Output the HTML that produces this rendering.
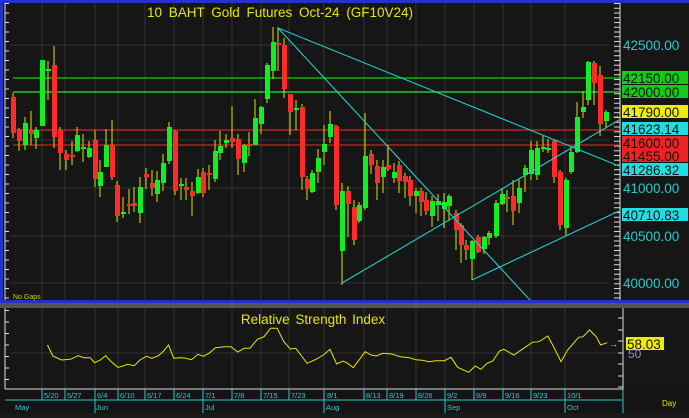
<!DOCTYPE html><html><head><style>body{margin:0;width:689px;height:413px;overflow:hidden;background:#1a1a1a;font-family:"Liberation Sans",sans-serif}</style></head><body>
<svg width="689" height="413" xmlns="http://www.w3.org/2000/svg" font-family="Liberation Sans, sans-serif">
<defs>
<pattern id="lt" x="0" y="3" width="10" height="9.5" patternUnits="userSpaceOnUse"><rect x="5" y="0" width="4" height="1" fill="#ddd"/></pattern>
<pattern id="rt" x="0" y="3" width="10" height="4.75" patternUnits="userSpaceOnUse"><rect x="614" y="0" width="6" height="1" fill="#ddd"/></pattern>
<pattern id="rt2" x="0" y="3" width="10" height="4.75" patternUnits="userSpaceOnUse"><rect x="4" y="0" width="6" height="1" fill="#ddd"/></pattern>
<pattern id="lt2" x="0" y="310" width="10" height="11.5" patternUnits="userSpaceOnUse"><rect x="5" y="0" width="4" height="1" fill="#ddd"/></pattern>
</defs>
<rect width="689" height="413" fill="#161616"/>
<rect x="0" y="0" width="689" height="3" fill="#2233cc"/>
<rect x="0" y="0" width="3" height="303" fill="#2233cc"/>
<rect x="0" y="300" width="689" height="3" fill="#2233cc"/>
<rect x="0" y="303" width="689" height="5" fill="#555"/>
<rect x="0" y="389" width="689" height="24" fill="#141414"/>
<line x1="620" y1="3" x2="620" y2="300" stroke="#ddd"/>
<line x1="5" y1="3" x2="5" y2="300" stroke="#ddd"/>
<rect x="5" y="3" width="5" height="297" fill="url(#lt)"/>
<rect x="610" y="3" width="10" height="297" fill="url(#rt2)" transform="translate(0,0)"/>
<g stroke="#333" stroke-width="1">
<path d="M10 45H609M10 92H609M10 140H609M10 188H609M10 236H609M10 283H609"/>
<path d="M42 3V300M65 3V300M95 3V300M118 3V300M145 3V300M174 3V300M203 3V300M232 3V300M261 3V300M289 3V300M324 3V300M364 3V300M387 3V300M416 3V300M445 3V300M474 3V300M503 3V300M531 3V300M565 3V300"/>
<path d="M42 308V389M65 308V389M95 308V389M118 308V389M145 308V389M174 308V389M203 308V389M232 308V389M261 308V389M289 308V389M324 308V389M364 308V389M387 308V389M416 308V389M445 308V389M474 308V389M503 308V389M531 308V389M565 308V389M10 353H617"/>
</g>
<text x="280" y="17" fill="#e6e600" font-size="13.5" text-anchor="middle" word-spacing="3">10 BAHT Gold Futures Oct-24 (GF10V24)</text>
<line x1="13" y1="78" x2="619" y2="78" stroke="#10b010" stroke-width="1.5"/>
<line x1="13" y1="92" x2="619" y2="92" stroke="#22ee22" stroke-width="1.2"/>
<line x1="13" y1="130" x2="619" y2="130" stroke="#dd2222" stroke-width="1.3"/>
<line x1="13" y1="145" x2="619" y2="145" stroke="#cc2222" stroke-width="1.3"/>
<path stroke="#e0e000" stroke-width="1" fill="none" d="M13 93V138M19 128V151M25 117V150M31 111V145M36 127V149M42 60V126M48 61V100M54 46V148M60 127V170M66 150V170M72 141V165M77 127V152M83 134V162M89 141V158M95 130V187M100 160V197M106 129V167M112 120V180M117 181V222M123 197V218M129 189V214M134 187V212M140 177V223M146 168V189M152 170V196M157 171V202M163 154V191M169 122V164M175 130V195M181 178V200M186 178V200M192 182V216M198 169V194M203 168V197M209 165V190M215 140V182M220 131V160M226 134V148M232 106V148M238 134V175M244 144V172M249 132V156M255 99V145M261 106V134M267 63V103M273 27V79M278 27V71M284 38V98M290 94V135M296 100V130M302 104V190M307 176V200M312 170V193M318 149V183M324 125V165M330 111V143M336 125V210M342 183V285M348 186V237M354 200V245M359 202V223M365 113V210M371 150V174M377 160V200M383 160V193M388 145V171M394 163V183M399 161V193M405 173V198M410 176V206M416 188V213M421 188V216M426 192V215M432 196V227M438 194V221M444 193V228M449 194V221M456 210V250M461 223V263M466 240V260M472 240V280M478 235V253M484 236V254M489 231V245M496 200V238M502 188V205M507 190V212M513 180V225M519 179V213M525 165V192M531 141V180M537 141V180M543 136V152M548 139V153M554 139V183M560 170V230M566 178V235M571 146V174M577 102V153M583 91V118M588 61V105M594 61V105M600 66V136M606 110V128"/>
<path fill="#ff2a2a" d="M11 97h5V133h-5zM17 129h5V141h-5zM29 130h5V134h-5zM52 65h5V137h-5zM58 130h5V153h-5zM64 154h5V160h-5zM70 155h5V157h-5zM93 140h5V179h-5zM110 145h5V177h-5zM115 185h5V216h-5zM127 204h5V206h-5zM132 203h5V206h-5zM144 174h5V177h-5zM150 183h5V188h-5zM173 131h5V191h-5zM184 187h5V190h-5zM190 191h5V196h-5zM201 172h5V193h-5zM207 173h5V175h-5zM230 138h5V142h-5zM236 139h5V159h-5zM247 144h5V146h-5zM276 43h5V45h-5zM282 45h5V89h-5zM288 94h5V112h-5zM300 107h5V177h-5zM305 179h5V189h-5zM334 126h5V205h-5zM346 191h5V204h-5zM352 207h5V240h-5zM369 154h5V165h-5zM375 166h5V183h-5zM386 165h5V169h-5zM397 165h5V181h-5zM403 176h5V182h-5zM408 180h5V196h-5zM419 191h5V202h-5zM424 200h5V211h-5zM454 213h5V230h-5zM459 225h5V245h-5zM464 245h5V250h-5zM476 237h5V252h-5zM505 197h5V199h-5zM511 196h5V211h-5zM552 141h5V177h-5zM558 172h5V225h-5zM592 63h5V83h-5zM598 75h5V124h-5z"/>
<path fill="#11ee22" d="M23 123h5V145h-5zM34 130h5V138h-5zM40 60h5V126h-5zM46 69h5V71h-5zM75 135h5V151h-5zM81 147h5V149h-5zM87 148h5V157h-5zM98 172h5V186h-5zM104 145h5V167h-5zM121 212h5V214h-5zM138 187h5V213h-5zM155 180h5V194h-5zM161 163h5V183h-5zM167 127h5V161h-5zM179 184h5V186h-5zM196 177h5V193h-5zM213 151h5V179h-5zM218 146h5V153h-5zM224 140h5V143h-5zM242 145h5V163h-5zM253 118h5V145h-5zM259 107h5V124h-5zM265 65h5V99h-5zM271 42h5V71h-5zM294 108h5V110h-5zM310 173h5V192h-5zM316 158h5V172h-5zM322 144h5V152h-5zM328 124h5V137h-5zM340 191h5V251h-5zM357 205h5V221h-5zM363 156h5V208h-5zM381 167h5V177h-5zM392 172h5V178h-5zM414 191h5V196h-5zM430 201h5V216h-5zM436 201h5V205h-5zM442 202h5V209h-5zM447 196h5V206h-5zM470 241h5V259h-5zM482 237h5V249h-5zM487 233h5V238h-5zM494 203h5V236h-5zM500 194h5V204h-5zM517 188h5V203h-5zM523 168h5V175h-5zM529 150h5V174h-5zM535 148h5V175h-5zM541 147h5V149h-5zM546 148h5V150h-5zM564 180h5V228h-5zM569 152h5V172h-5zM575 117h5V152h-5zM581 107h5V112h-5zM586 62h5V100h-5zM604 112h5V121h-5z"/>
<g stroke="#22cccc" stroke-width="1.1" fill="none">
<path d="M278 28L619 166"/>
<path d="M278 28L530 300"/>
<path d="M342 283L619 120"/>
<path d="M472 280L619 211"/>
</g>
<text x="611" y="118" fill="#e6e600" font-size="9">→</text>
<g font-size="13.5" fill="#22cccc">
<text x="623" y="50">42500.00</text>
<text x="623" y="193">41000.00</text>
<text x="623" y="241">40500.00</text>
<text x="623" y="288">40000.00</text>
</g>
<g font-size="13.5">
<rect x="622" y="71" width="66" height="13" fill="#11cc11"/><text x="623" y="83" fill="#111">42150.00</text>
<rect x="622" y="85" width="66" height="13" fill="#11cc11"/><text x="623" y="97" fill="#111">42000.00</text>
<rect x="622" y="105" width="66" height="13" fill="#eeee00"/><text x="623" y="117" fill="#111">41790.00</text>
<rect x="622" y="122" width="66" height="13" fill="#22dddd"/><text x="623" y="134" fill="#111">41623.14</text>
<rect x="622" y="136" width="66" height="26" fill="#ee2222"/><text x="623" y="148" fill="#111">41600.00</text><text x="623" y="161" fill="#111">41455.00</text>
<rect x="622" y="163" width="66" height="13" fill="#22dddd"/><text x="623" y="175" fill="#111">41286.32</text>
<rect x="622" y="208" width="66" height="13" fill="#22dddd"/><text x="623" y="220" fill="#111">40710.83</text>
</g>
<text x="13" y="299" fill="#cccc00" font-size="7">No Gaps</text>
<line x1="5" y1="308" x2="5" y2="389" stroke="#ddd"/>
<rect x="5" y="310" width="5" height="78" fill="url(#lt2)"/>
<line x1="623" y1="308" x2="623" y2="389" stroke="#ddd"/>
<rect x="617" y="310" width="6" height="78" fill="url(#lt2)" transform="translate(612,0)" opacity="0"/>
<g stroke="#ddd"><path d="M618 318H623M618 330H623M618 341H623M618 353H623M618 364H623M618 376H623M618 387H623"/></g>
<line x1="5" y1="389" x2="623" y2="389" stroke="#ddd"/>
<text x="313" y="324" fill="#e6e600" font-size="13.5" text-anchor="middle" word-spacing="2">Relative Strength Index</text>
<polyline fill="none" stroke="#e6e600" stroke-width="1" points="47.5,345 52.8,356 61.6,360 70.4,359.3 78.3,355.7 83.6,357.7 90.2,357.7 94.6,362.7 100.3,360 105.6,355.7 111.3,361.7 117.9,367.3 123.2,366 127.6,364.3 134.2,365.7 139.9,360 146.5,356.3 151.8,358.3 158.4,355.7 163.7,351 168.5,345 173.8,358.3 180.4,357.7 184.8,358 191.4,359.7 198,354.3 203.3,356.3 209,353.3 215.6,347.7 224.4,346.7 231,346.7 237.6,352 244.2,348.3 249.9,348.3 257.4,339.3 264,336.7 270.6,328.3 277.2,328.3 283.8,341.7 290.4,349 295.7,348.3 307.1,363.3 314.6,360 323.4,355 330,349.3 336.6,364 343.2,361 347.6,363.3 353.3,367.7 365.2,351.7 370.9,355 376.2,356 382.8,353.3 391.6,354 400.4,356.7 409.2,357.7 415.8,359.7 422.4,360.3 429,361.7 435.6,360.7 444.4,360.7 451,357.3 457.6,367.3 468.6,372.3 475.2,366 480.9,369.3 487.1,363.3 492.8,361 499.4,351 503.8,349.3 513.9,355 523.6,348.3 532.4,342.3 539,341.7 547.8,336 554.4,348.3 561,361.7 567.6,350 578.6,337.3 583,336.7 589.6,330 596.2,336.7 600.6,345 607.2,342.7"/>
<text x="609" y="347" fill="#e6e600" font-size="9">→</text>
<rect x="626" y="337" width="38" height="13" fill="#eeee00"/><text x="627" y="349" fill="#111" font-size="13.5">58.03</text>
<text x="628" y="358" fill="#8899bb" font-size="12">50</text>
<line x1="5" y1="400" x2="623" y2="400" stroke="#22cccc"/>
<g stroke="#22cccc"><path d="M42 389V400M65 389V400M95 389V400M118 389V400M145 389V400M174 389V400M203 389V400M232 389V400M261 389V400M289 389V400M324 389V400M364 389V400M387 389V400M416 389V400M445 389V400M474 389V400M503 389V400M531 389V400M565 389V400M95 400V413M203 400V413M324 400V413M445 400V413M565 400V413M623 389V413"/></g>
<g fill="#22cccc" font-size="7.5">
<text x="44" y="398">5/20</text><text x="67" y="398">5/27</text><text x="97" y="398">6/4</text><text x="120" y="398">6/10</text><text x="147" y="398">6/17</text><text x="176" y="398">6/24</text><text x="205" y="398">7/1</text><text x="234" y="398">7/8</text><text x="263" y="398">7/15</text><text x="291" y="398">7/23</text><text x="327" y="398">8/1</text><text x="366" y="398">8/13</text><text x="389" y="398">8/19</text><text x="418" y="398">8/26</text><text x="447" y="398">9/2</text><text x="476" y="398">9/9</text><text x="505" y="398">9/16</text><text x="533" y="398">9/23</text><text x="567" y="398">10/1</text>
<text x="15" y="410">May</text><text x="96" y="410">Jun</text><text x="205" y="410">Jul</text><text x="326" y="410">Aug</text><text x="447" y="410">Sep</text><text x="567" y="410">Oct</text>
</g>
<text x="662" y="406" fill="#e6e600" font-size="8">Day</text>
</svg>
</body></html>
